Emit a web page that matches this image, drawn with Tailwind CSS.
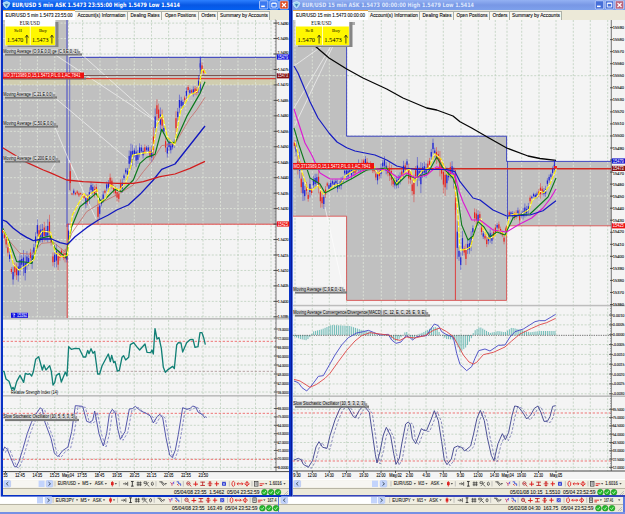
<!DOCTYPE html>
<html lang="en"><head><meta charset="utf-8"><title>EUR/USD charts</title>
<script src="https://cdn.jsdelivr.net/npm/@tailwindcss/browser@4"></script></head>
<body class="w-[625px] h-[514px] overflow-hidden bg-[#ece9d8] font-['Liberation_Sans',sans-serif]">
<div class="flex flex-col w-[625px] h-[514px]">
  <main class="flex h-[497px]">
    <section class="flex flex-col w-[291px] h-[497px] border-l border-l-[#c4c8f4] bg-[#ece9d8]">
      <div class="flex flex-col h-[497px] border-l-2 border-r-2 border-b-2 border-[#0831c4]">
        <header id="titleL" class="h-[10px] bg-linear-to-b from-[#2c80ff] via-[#0757e4] to-[#0560f0]"></header>
        <nav id="tabsL" class="flex h-[10px] bg-[#ece9d8]"></nav>
        <div id="chartL" class="h-[459px]"></div>
        <div id="toolL" class="h-[9px] border-t border-white bg-[#f0eee2]"></div>
        <div id="statL" class="h-[7px] border-t border-[#b8b5a5] bg-[#ece9d8]"></div>
      </div>
    </section>
    <section class="flex flex-col w-[334px] h-[497px] border-l border-l-[#06189c] bg-[#ece9d8]">
      <div class="flex flex-col h-[497px] border-l border-b-2 border-[#5d7ce0] border-b-[#3746b8]">
        <header id="titleR" class="h-[10px] bg-linear-to-b from-[#93b1f3] via-[#7897e5] to-[#7da0ec]"></header>
        <nav id="tabsR" class="flex h-[10px] bg-[#ece9d8]"></nav>
        <div id="chartR" class="h-[459px]"></div>
        <div id="toolR" class="h-[9px] border-t border-white bg-[#f0eee2]"></div>
        <div id="statR" class="h-[7px] border-t border-[#b8b5a5] bg-[#ece9d8]"></div>
      </div>
    </section>
  </main>
  <footer class="flex h-[17px] border-b-2 border-[#7590e4] bg-[#ece9d8]">
    <div class="flex flex-col w-[279px] border-r border-[#5d7ce0]">
      <div id="toolBL" class="h-[7px] bg-[#f0eee2]"></div>
      <div id="statBL" class="h-[8px] border-t border-[#b8b5a5]"></div>
    </div>
    <div class="flex flex-col w-[346px] border-r-2 border-[#5d7ce0]">
      <div id="toolBR" class="h-[7px] bg-[#f0eee2]"></div>
      <div id="statBR" class="h-[8px] border-t border-[#b8b5a5]"></div>
    </div>
  </footer>
</div>
<script>
const put = (id, s) => document.getElementById(id).innerHTML = s;
const svg = (x, y, w, h, s) => `<svg class="block shrink-0 overflow-visible" width="${w}" height="${h}" viewBox="${x} ${y} ${w} ${h}">${s}</svg>`;
const T = (x, y, w, s, size = 5, a = '') => `<text x="${x}" y="${y}" textLength="${w}" lengthAdjust="spacingAndGlyphs" font-size="${size}" ${a}>${s}</text>`;
const L = (x1, y1, x2, y2, c, w = 1, a = '') => `<line x1="${x1}" y1="${y1}" x2="${x2}" y2="${y2}" stroke="${c}" stroke-width="${w}" ${a}/>`;
const R = (x, y, w, h, c, a = '') => `<rect x="${x}" y="${y}" width="${w}" height="${h}" fill="${c}" ${a}/>`;
const P = (p, c, w = 1, a = '') => `<polyline points="${p}" fill="none" stroke="${c}" stroke-width="${w}" stroke-linejoin="round" ${a}/>`;
const zoomed = (x, y, s) => `<g transform="translate(${x} ${y}) scale(.33333)">${s}</g>`;
let seed = 7;
const rnd = () => (seed = (seed * 16807) % 2147483647) / 2147483647;

/* title bars */
function title(x0, w, textX, textW, s, btn, active) {
  let g = `<path d="M${textX-9} 3q4 -3 7 0q-1 4 -3.5 5q-3 -1 -3.5 -5z" fill="#9bd3ee" stroke="#d7f3ff" stroke-width=".7"/><path d="M${textX-7} 4h3l-1.5 3z" fill="#397ab8"/>`;
  g += T(textX, 7.1, textW, s, 6, `font-family="DejaVu Sans Condensed, DejaVu Sans, sans-serif" font-weight="bold" fill="${active ? '#fff' : '#dce6fd'}"`);
  const cols = active ? ['#3b79f0', '#3b79f0', '#df4b22'] : ['#466fd9', '#466fd9', '#bd6478'];
  btn.forEach((b, i) => {
    g += `<rect x="${b-4.2}" y=".8" width="8.4" height="8.2" rx="1" fill="${cols[i]}" stroke="#d5e1ff" stroke-width=".7"/>`;
    g += i == 0 ? R(b - 2.5, 5.6, 3.6, 1.5, '#fff') : i == 1 ? `<path d="M${b-2.2} 3h4.4v4h-4.4zM${b-2.2} 3.4h4.4" fill="none" stroke="#fff" stroke-width=".9"/>` : `<path d="M${b-2} 3l4 4m0 -4l-4 4" stroke="#fff" stroke-width="1.2"/>`;
  });
  return svg(x0, 0, w, 10, g);
}
put('titleL', title(3, 286, 12, 168, 'EUR/USD 5 min ASK 1.5473 23:55:00 High 1.5479 Low 1.5414', [263.7, 274, 284], true));
put('titleR', title(293, 332, 302, 172, 'EUR/USD 15 min ASK 1.5473 00:00:00 High 1.5479 Low 1.5414', [599.5, 609.5, 619.5], false));

/* tabs */
const tab = (w, tw, s, on) => `<div class="${on ? 'bg-white border-t border-[#e8a33c] h-[10px]' : 'bg-[#f8f7f1] border-t border-r border-[#aeb2a8] mt-[1px] h-[9px]'} shrink-0" style="width:${w}px">${svg(0, on ? 1 : 2, w - (on ? 0 : 1), on ? 9 : 8, T((w - tw) / 2, 7.2, tw, s, 5.4, 'fill="#111" stroke="#111" stroke-width=".12"'))}</div>`;
const names = ['Account(s) Information', 'Dealing Rates', 'Open Positions', 'Orders', 'Summary by Accounts'];
put('tabsL', tab(72, 67, 'EUR/USD 5 min 1.5473 23:55:00', 1) + names.map((n, i) => tab([53, 34, 37, 19, 52][i], [48, 29, 31, 14.5, 48][i], n)).join(''));
put('tabsR', tab(75, 69, 'EUR/USD 15 min 1.5473 00:00:00', 1) + names.map((n, i) => tab([52, 34, 36, 20, 52][i], [48, 29, 31, 15, 48][i], n)).join(''));

/* candles follow [x, middle, half range] key points */
function candles(k, step) {
  let g = '', i = 0;
  for (let x = k[0][0]; x <= k[k.length - 1][0]; x += step) {
    while (i < k.length - 2 && x > k[i + 1][0]) i++;
    const a = k[i], b = k[i + 1], t = (x - a[0]) / (b[0] - a[0]);
    const m = a[1] + (b[1] - a[1]) * t, h = a[2] + (b[2] - a[2]) * t;
    const down = b[1] > a[1], c = rnd() < .78 === down ? '#e8231e' : '#1c22d6';
    const off = (rnd() - .5) * h * .9, hh = h * (.35 + rnd() * .65);
    g += L(x, m + off - hh, x, m + off + hh, c, 1.8, 'opacity=".75"');
    g += R(x - 1.8, m + off - hh * .42, 3.6, hh * .84, c);
  }
  return g;
}
function yellow(k) {
  const p = k.map((a, i) => [a[0] + 2, i ? a[1] * .65 + k[i - 1][1] * .35 : a[1]].join()).join(' ');
  return P(p, '#fff200', 3.3) + P(p, '#fffbd0', 3, 'stroke-dasharray="5 13"');
}
const grid = (xs, ys, x1, x2, y1, y2) => xs.map(x => L(x, y1, x, y2, '#bccfbc', .8, 'stroke-dasharray="2 1.6"')).join('') + ys.map(y => L(x1, y, x2, y, '#bccfbc', .8, 'stroke-dasharray="2 1.6"')).join('');
const gridOnGray = (xs, ys, rx, ry, rw, rh) => xs.filter(x => x > rx && x < rx + rw).map(x => L(x, ry, x, ry + rh, '#e2e8dc', .8, 'stroke-dasharray="2 1.6"')).join('') + ys.filter(y => y > ry && y < ry + rh).map(y => L(rx, y, rx + rw, y, '#e2e8dc', .8, 'stroke-dasharray="2 1.6"')).join('');
const label = (x, y, w, s) => R(x + 2, y + 1.4, w + 1, 2.2, '#777') + R(x, y - 3.2, w, 4.8, '#d6d6d6') + T(x + .3, y + .8, w - 1.5, s, 4.5, 'fill="#000"') + R(x + w - 1, y - 1, 2.2, 3.6, '#999');
const axisT = (x, y, s, w) => T(x, y + 1.5, w, s, 4.3, 'fill="#111" stroke="#111" stroke-width=".12"');
const tag = (x, y, w, s, c) => R(x - 1, y - 2.6, w + 2, 5.2, c) + T(x, y + 1.6, w - .5, s, 4.5, 'fill="#fff"');
function quote(x, y, w) {
  const h = w / 2;
  const cell = (cx, n, v) => R(cx, y + 6.5, h - .4, 18.6, '#fff700') + T(cx + h / 2 - 4, y + 11.5, 8, n, 5, 'font-family="Liberation Serif"') + T(cx + 1.5, y + 21.6, h * .66, v, 7, 'font-family="Liberation Serif"') + `<path d="M${cx+h-3.4} ${y+23.5}v-8M${cx+h-5} ${y+17.5}l1.6 -2.4l1.6 2.4" stroke="#222" stroke-width=".8" fill="none"/>`;
  return R(x + 2, y + 2, w + 1.5, 25, '#858585') + R(x - .5, y, w + .8, 25.4, '#fff') + T(x + w * .29, y + 5, 20, 'EUR/USD', 5.2, 'font-family="Liberation Serif"') + cell(x, 'Sell', '1.5470') + cell(x + h + .3, 'Buy', '1.5473');
}
const order = (y, x = 3) => R(x + 1, y + 2, 82, 2, '#777') + R(x, y - 3, 81, 6, '#ee1111') + T(x + .5, y + 1.7, 77, 'MO,3713989,D,15,1.5473,P/L:0.1,AC,7841', 4.5, 'fill="#fff"');

/* left chart */
{
  const xs = [20.3, 37.4, 54.8, 82.6, 100, 117, 134.3, 151.5, 168.6, 185.8, 203, 220.5, 238, 255.5, 271];
  const ys = Array.from({ length: 20 }, (_, i) => 23.1 + i * 15.46);
  let g = R(3, 20, 286, 459, '#f4f4f4') + grid([...xs, 68.4], ys, 3, 276, 20, 318) + grid([...xs, 68.4], [329, 338, 347, 356, 365, 374, 383, 392, 408.5, 416.9, 425.3, 433.7, 442.1, 450.5, 458.9, 467.3], 3, 276, 320, 471);
  g += R(3, 20, 65, 298, '#c0c0c0') + R(68, 57, 208, 167, '#c0c0c0');
  g += R(3, 79, 273, 6, '#d0cdaf');
  g += gridOnGray(xs, ys, 3, 20, 65, 298) + gridOnGray(xs, ys, 68, 57, 208, 167);
  g += L(67, 20, 67, 227, '#3338c8', .9) + L(69.7, 57.3, 69.7, 190, '#4a50cc', .7) + L(69.7, 57.3, 276, 57.3, '#2b34bd');
  g += L(67.2, 224, 67.2, 318, '#e24848') + L(67, 224.2, 276, 224.2, '#e24848');
  g += P('54,54 160,124', '#f4f4f4', .7) + P('80,53 156,121', '#f4f4f4', .7) + P('54,97 131,162', '#f4f4f4', .7) + P('54,125 73,170', '#f4f4f4', .7) + P('50,172 57,160', '#f4f4f4', .7) + P('69,160 96,219', '#f4f4f4', .7);
  g += L(3, 75.5, 276, 75.5, '#7c5550') + L(3, 78.6, 276, 78.6, '#df3b32', 1.1);
  const k1 = [[8,210,12],[20,245,24],[38,350,28],[55,320,34],[75,315,42],[100,290,28],[113,200,42],[125,220,34],[150,215,42],[163,310,42],[180,280,28],[200,290,24],[206,190,90],[209,60,60],[215,98,10],[250,102,10],[260,120,26],[275,85,28],[289,90,34],[295,150,36],[315,95,15],[330,65,26],[355,105,22],[375,50,24],[392,-5,40],[396,-20,38],[430,-22,24],[455,-25,24],[462,-70,80],[470,-155,38],[485,-125,36],[500,-38,26],[522,-48,14],[529,-110,50],[540,-170,26],[550,-160,22],[565,-210,22],[590,-205,16],[598,-245,40],[602,-280,40],[608,-268,12],[616,-254,14]];
  const mid = candles(k1, 5.2) + L(601, -310, 601, -200, '#3038cf', 3) + P('8,205 15,225 30,245 60,280 95,283 125,250 160,247 195,275 203,255 215,220 260,155 300,130 350,105 400,75 430,35 455,5 485,-43 525,-49 570,-125 590,-150 615,-188', '#c86460', 2.2)
    + P('8,205 30,250 50,305 75,306 95,310 120,235 150,228 165,265 198,293 205,250 215,200 240,140 265,120 288,100 305,128 345,88 365,95 400,60 420,10 440,-8 465,-17 485,-92 505,-54 525,-52 560,-130 600,-200 615,-235', '#0b7a1c', 3.6)
    + yellow(k1.filter((_, i) => i != 12 && i != 13 && i != 28))
    + P('8,180 20,185 40,205 60,220 80,232 100,242 130,237 155,237 180,248 203,253 225,230 260,203 295,180 325,165 350,150 385,135 420,103 460,60 485,28 525,12 615,-102', '#1117bf', 4)
    + P('8,-37 60,-5 75,5 130,30 150,38 200,60 250,65 350,70 400,70 430,65 480,50 525,42 570,25 615,4', '#d21d1d', 3.8);
  g += zoomed(0, 160, mid);
  g += label(3, 52, 76, 'Moving Average (O,9,E,0,0)  ge (C,9,E,0,-1)') + label(3, 95, 51, 'Moving Average (C,21,E,0,0)') + label(3, 124, 52, 'Moving Average (C,50,E,0,0)') + label(3, 159, 54, 'Moving Average (C,200,E,0,0)');
  g += order(75.5) + quote(5.5, 20, 49.5);
  g += R(11, 312.8, 17, 5, '#1010e0') + `<path d="M12.5 314h2.5l-1 1.5v1.8" stroke="#fff" stroke-width=".8" fill="none"/>` + T(17, 317, 10, '15392', 4.6, 'fill="#fff"');
  g += R(3, 318, 286, 1.6, '#bdbdbd') + R(3, 395, 286, 1.6, '#bdbdbd');
  /* rsi and stochastic panels */
  let low = L(8, 94, 828, 94, '#ee5555', 2.4, 'stroke-dasharray="7 5"') + L(8, 184, 828, 184, '#a88f8f', 2.4, 'stroke-dasharray="7 5"') + L(8, 310, 828, 310, '#ee5555', 2.4, 'stroke-dasharray="7 5"') + L(8, 448, 828, 448, '#ee5555', 2.4, 'stroke-dasharray="7 5"');
  low += P('8,184 12,184 18,207 27,214 35,238 39,232 43,240 50,215 60,196 71,217 76,190 84,193 89,191 95,198 100,185 107,148 116,140 127,180 132,165 138,180 149,167 154,184 159,225 164,218 169,196 178,190 184,216 196,186 201,198 206,110 214,118 225,115 238,116 250,141 257,141 263,121 267,131 273,116 279,130 284,124 293,192 299,192 306,168 325,132 331,155 335,136 341,158 345,154 352,183 358,181 366,142 371,137 377,150 386,142 391,104 401,98 410,110 419,120 435,102 441,127 452,128 456,120 460,132 465,56 471,87 477,83 484,115 490,172 496,187 505,178 518,169 523,176 530,105 535,98 543,99 548,126 560,98 570,89 579,88 585,112 594,110 600,68 606,68 611,83 616,104', '#128076', 4);
  const st = '8,425 14,411 22,418 32,443 43,469 49,471 57,454 68,419 82,370 94,338 104,318 121,293 127,299 135,337 153,385 163,429 174,440 188,422 204,411 215,365 226,287 248,289 260,334 269,337 278,331 284,303 297,371 304,392 310,408 320,370 328,313 337,298 346,309 353,356 361,388 375,365 388,297 397,296 406,289 421,302 440,311 451,318 460,339 472,319 480,313 488,323 498,383 509,435 517,443 526,420 535,373 548,293 561,298 571,295 578,288 587,291 594,306 607,314 615,324';
  low += P(st, '#494ba6', 2.8) + `<g transform="translate(8 3)">${P(st, '#6769b7', 2.2, 'stroke-dasharray="8 5"')}</g>`;
  g += zoomed(0, 310, low);
  g += T(11, 394, 47, 'Relative Strength Index (14)', 4.6) + label(3, 417.5, 73, 'Slow Stochastic Oscillator (10, 5, 5, 3, 5)');
  g += L(276, 20, 276, 471.5, '#555', .8) + L(3, 471.6, 289, 471.6, '#333', .9);
  for (let y = 20; y < 318; y += 3.09) g += L(274.7, y, 276, y, '#777', .6);
  for (let y = 323; y < 471; y += 4.5) g += L(275, y, 276, y, '#777', .6);
  ys.forEach((y, i) => g += L(273.5, y, 278, y, '#333', .8) + (i == 13 ? '' : axisT(277.8, i == 2 ? y - 1.8 : y, '1.5' + (490 - i * 5), 10.8)));
  ['78.0000', '72.0000', '66.0000', '60.0000', '54.0000', '48.0000', '42.0000', '36.0000'].forEach((s, i) => g += L(274, 329 + i * 9, 278, 329 + i * 9, '#333', .7) + axisT(277.8, 329 + i * 9, s, 10.8));
  ['86.0000', '75.0000', '64.0000', '53.0000', '42.0000', '31.0000', '20.0000', '9.0000'].forEach((s, i) => g += L(274, 408.5 + i * 8.4, 278, 408.5 + i * 8.4, '#333', .7) + axisT(277.8, 408.5 + i * 8.4, s, 10.8));
  g += tag(277.8, 57, 10.6, '15479', '#1111dd') + tag(277.8, 75.8, 10.6, '15473', '#811') + tag(277.8, 224, 10.6, '15425', '#e11');
  ['55', '12:45', '14:35', '15:25', 'May,04', '17:55', '18:45', '19:35', '20:25', '21:15', '22:05', '22:55', '23:50'].forEach((s, i) => { const x = [5.5, 20, 37.3, 54.6, 68, 82, 99.5, 117, 134.5, 151.5, 168.7, 186, 203.3][i], w = i == 0 ? 4 : i == 4 ? 12 : 9.5; g += L(x, 471, x, 473, '#333', .8) + T(x - w / 2, 476.8, w, s, 4.8, 'stroke="#111" stroke-width=".1"'); });
  put('chartL', svg(3, 20, 286, 459, g));
}

/* right chart */
{
  const xs = [295, 312.3, 329.3, 363.3, 381.3, 395.3, 409, 426, 443.3, 461, 478.3, 495.3, 507, 521.7, 539, 556, 573.3, 590.3, 607.7];
  const ys = [75.7, 136, 196, 256];
  let g = R(293, 20, 332, 459, '#f4f4f4') + grid([...xs, 346.7], [...ys, ...[0, 1, 3, 4, 5, 6, 7, 8].map(i => 315 + i * 9.85), ...[0, 1, 2, 3, 4, 5, 6, 7].map(i => 409.3 + i * 8.3)], 293, 611, 20, 471);
  const boxes = [[293, 20, 53.5, 196], [346.5, 136, 160.3, 164.3], [506.8, 161.3, 104.2, 64.4]];
  boxes.forEach(b => { g += R(...b, '#c0c0c0') + gridOnGray(xs, ys, ...b); });
  g += P('346.6,20 346.6,136.2 506.6,136.2 506.6,161.4 611,161.4', '#3038c0', .9) + L(507.4, 161, 507.4, 215, '#3038c0', .9);
  g += P('293,216.2 346.6,216.2 346.6,300.4 506.6,300.4 506.6,225.8 611,225.8', '#d85050', .9) + L(455.4, 170, 455.4, 300, '#e03030', .9);
  g += P('294,66 342,32', '#f4f4f4', .7) + P('294,108 337,36', '#f4f4f4', .7) + P('295,125 334,44', '#f4f4f4', .7) + P('325,207 343,288', '#fff', .6);
  g += L(293, 168.8, 611, 168.8, '#d12a22', 1.5);
  const a = [[13,50,26],[22,105,34],[35,165,50],[50,205,44],[65,190,22],[82,175,50],[98,225,34],[110,185,20],[130,180,22],[150,175,20],[165,140,26],[190,135,20],[205,125,20],[235,115,22],[250,130,18],[262,155,30],[285,115,26],[300,160,44],[318,185,28],[345,115,26],[358,140,34],[370,190,56],[380,140,60],[395,135,50],[415,125,16],[432,65,34],[450,120,50],[470,165,44],[488,145,50],[492,145,60],[500,290,76],[508,420,40],[518,350,42],[528,385,38],[540,355,28],[555,275,36],[572,285,28],[577,325,28],[595,350,24],[610,325,20],[625,310,22],[645,345,17],[650,290,15],[656,265,10],[672,267,12],[690,270,28],[715,245,18],[725,215,12],[740,215,14],[748,190,36],[760,210,16],[775,170,20],[789,140,18],[797,125,14]];
  g += zoomed(290, 125, candles(a, 5.2) + yellow(a.filter(q => q[0] != 492)));
  g += P('294,128 299,145 305,163 310,178 320,184 325,193 340,185 353,178 366.7,170 386.7,168 396.7,185 406.7,175 415,178 428,173 436.7,157 443,168 453,178 456.7,188 461.7,225 468,240 473,236 478,221.7 484,227 490,236.7 497,232 505,235 513,218 518,215 530,214 541.7,203 548,197 556,178', '#0b7a1c', 1.1);
  g += P('294,109 305,143 311.7,155 320,173 330,179 346.7,179 360,171.7 370,168 386.7,170 398,177.7 406.7,173 415,177.7 426.7,175 436.7,166.7 446,170 455,175 459,191 463,201.7 471.7,220 480,220 493,230 506.7,232 518,225 531.7,218 543,208 550,199 556,189', '#dd16d3', 1.1);
  g += P('294,66 298,73 310,101.7 318,118 329,133 337,142 346.7,147.7 355,151 365,153 375,155 386.7,160 396.7,166 405,168 416.7,169.5 446.7,169.5 455,171.7 460,181.7 473,198 480,200 493,210 506.7,216 530,215 543,210.7 549,206 556,200.7', '#151bc2', 1.2);
  g += P('307,38 312.7,44 329,58 346.7,69 363,78 386.7,89 403,98 426.7,108 436.7,110 453,116 460,121.7 471.7,128 489,138 506.7,148 528,156 540,158.5 556,160.3', '#050505', 1.3);
  g += L(554.6, 160, 554.6, 170, '#1c22d6', .8) + R(554, 166, 3, 2.6, '#e22');
  g += order(166, 293) + R(351, 22, 4, 3, '#aaa') + quote(296, 20, 53) + label(293, 290, 51, 'Moving Average (C,9,E,0,-1)');
  g += R(293, 304.8, 332, 1.5, '#bdbdbd') + R(293, 395.4, 332, 1.6, '#bdbdbd');
  /* macd and stochastic panels */
  let low = '';
  const hk = [[14,-5],[30,-12],[50,-16],[62,-4],[68,10],[95,17],[125,30],[180,27],[215,15],[245,8],[262,1],[295,-3],[318,-20],[335,-5],[348,12],[368,-14],[380,0],[400,8],[425,22],[440,25],[450,3],[470,-12],[495,-14],[510,-52],[530,-35],[545,-8],[552,12],[570,24],[600,6],[625,12],[645,8],[665,22],[690,16],[720,8],[750,12],[800,12]];
  for (let x = 14, i = 0; x <= 800; x += 5.7) { while (x > hk[i + 1][0]) i++; const p = hk[i], q = hk[i + 1], h = p[1] + (q[1] - p[1]) * (x - p[0]) / (q[0] - p[0]); low += L(x, 90, x, 90 - h, '#65b7b2', 2.8); }
  low += L(8, 91, 963, 91, '#555', 2.4, 'stroke-dasharray="4 3"');
  low += P('12,228 25,233 36,248 50,258 62,245 75,228 85,214 100,212 118,180 135,150 155,120 175,98 200,84 220,80 235,76 250,82 270,90 295,88 305,105 318,115 333,111 348,92 360,98 368,105 380,95 410,92 420,75 433,57 445,62 455,80 468,88 490,97 500,145 510,178 530,197 545,185 555,160 566,137 585,132 600,138 625,121 645,120 660,96 675,80 700,72 735,50 748,47 765,47 797,28', '#4447c5', 2.7);
  low += P('12,223 30,228 60,247 80,238 105,220 120,205 145,170 170,136 195,108 215,92 240,83 270,87 300,91 315,103 330,106 350,96 375,99 405,92 430,76 450,69 470,80 490,95 505,122 520,150 537,171 550,177 560,172 580,149 610,142 645,126 665,108 690,87 725,70 750,59 770,53 797,40', '#df4545', 2.7);
  low += L(8, 324, 963, 324, '#ee5555', 2.4, 'stroke-dasharray="7 5"') + L(8, 468, 963, 468, '#ee5555', 2.4, 'stroke-dasharray="7 5"') ;
  const st = '12,465 25,460 33,464 40,478 55,487 68,466 78,426 87,410 98,427 111,430 120,392 135,345 150,310 163,303 175,308 190,335 196,338 208,316 220,302 230,312 238,322 246,378 256,448 261,474 270,440 280,390 289,367 302,393 311,445 318,478 328,460 336,413 347,357 355,351 361,358 367,400 377,416 387,390 394,371 402,376 410,376 424,342 433,317 445,347 455,410 463,465 471,479 484,462 492,428 503,423 514,427 524,438 542,423 550,390 561,340 571,316 583,347 592,398 604,451 612,467 624,416 637,386 646,404 656,382 666,332 674,303 685,305 700,325 710,342 722,330 733,310 744,303 753,323 762,349 772,349 780,335 788,304 797,302';
  low += P(st, '#41458f', 2.8) + `<g transform="translate(9 3)">${P(st.replace(' 797,302', ''), '#6164a5', 2.2, 'stroke-dasharray="8 5"')}</g>`;
  g += zoomed(290, 305, low);
  g += label(293, 313, 134, 'Moving Average Convergence/Divergence(MACD) (C, 12, E, C, 26, E, 9, E)') + label(293, 404.2, 73, 'Slow Stochastic Oscillator (10, 5, 3, 2, 3)');
  g += L(611.3, 20, 611.3, 471, '#555', .8) + L(293, 471, 625, 471, '#333', .9);
  for (let y = 306; y < 471; y += 2.5) g += L(610, y, 611, y, '#777', .6);
  for (let i = 0; i < 24; i++) { const y = 27.6 + i * 12.04; g += L(610, y, 613, y, '#333', .8) + (i == 11 ? '' : axisT(612.8, i == 12 ? 173.6 : i == 16 ? 220.6 : i == 17 ? 231.6 : y, 15590 - i * 10, 11.2)); }
  ['0.0010', '0.0005', '0.0000', '-0.0005', '-0.0010', '-0.0015', '-0.0020', '-0.0025', '-0.0030'].forEach((s, i) => g += L(609, 315 + i * 9.85, 613, 315 + i * 9.85, '#333', .7) + axisT(612.8, 315 + i * 9.85, s, 11.6));
  ['85.5000', '75.0000', '64.5000', '54.0000', '43.5000', '33.0000', '22.5000', '12.0000'].forEach((s, i) => g += L(609, 409.3 + i * 8.3, 613, 409.3 + i * 8.3, '#333', .7) + axisT(612.8, 409.3 + i * 8.3, s, 11.6));
  g += tag(612.8, 161, 11.5, '15479', '#1111cc') + tag(612.8, 168.4, 11.5, '15473', '#811') + tag(612.8, 225.8, 11.5, '15425', '#e11');
  ['9:30', '12:00', '14:30', '17:00', '19:30', '22:00', 'May,02', '2:00', '4:30', '7:00', '9:30', '12:00', '14:30', 'May,04', '19:00', '21:30', 'May,05'].forEach((s, i) => { const x = [297, 312.3, 329.3, 346.5, 363.7, 381, 395.5, 409.5, 426.3, 443.3, 460.5, 478, 494.5, 507.7, 521.5, 538.5, 556][i], w = s[0] == 'M' ? 12.5 : s.length == 4 ? 7.5 : 9; g += L(x, 471, x, 473, '#333', .8) + T(x - w / 2, 476.8, w, s, 4.8, 'stroke="#111" stroke-width=".1"'); });
  put('chartR', svg(293, 20, 332, 459, g));
}

/* toolbar icons, drawn on a 3x grid centred on y = 0 */
function tools(sym, per, price) {
  const t = (x, w, s) => T(x, 5, w, s, 14, 'fill="#222" stroke="#222" stroke-width=".3"');
  const dd = x => `<path d="M${x} -2h7l-3.5 4z" fill="#222"/>`;
  const p = (d, c, w = 2.6) => `<path d="${d}" stroke="${c}" stroke-width="${w}" fill="none"/>`;
  return L(165, -8, 165, 8, '#aaa', 2) + t(173, 55, sym) + dd(233) + t(247, 18, per) + dd(268) + t(284, 26, 'ASK') + dd(314)
    + p('M337 -8v16', '#d22') + R(333, -5, 8, 9, '#d22') + dd(344) + L(358, -8, 358, 8, '#aaa', 2)
    + p('M369 0h11M376 -4l4 4l-4 4M383 -6v12', '#222', 2) + p('M393 -7h8M397 -7v14M393 7h8', '#222', 2.5) + p('M414 -7v14M421 -7v14M410 -3h15M410 3h15', '#222', 2)
    + p('M432 -6h8v5h-8zM434 7l12 -12M440 1l8 7', '#333', 2) + `<ellipse cx="457" cy="0" rx="3" ry="5" fill="none" stroke="#222" stroke-width="2"/>` + L(468, -8, 468, 8, '#aaa', 2)
    + p('M478 -6h9l3 5M483 -5l8 11M490 -1l6 4', '#333', 2.3) + dd(494)
    + p('M511 -4l5 4v6M516 0l6 -6', '#c3396b') + p('M521 -6v7', '#55f') + p('M530 -6h6v6h6v6', '#3548d2') + p('M536 5l-5 -4', '#d33') + L(550, -8, 550, 8, '#aaa', 2)
    + `<circle cx="565" cy="-1" r="5" fill="#fff" stroke="#933" stroke-width="2.5"/>` + p('M569 3l5 5M562 -1h6', '#c22')
    + p('M580 1h14M587 -7v14', '#d22', 3) + p('M601 -5h14M601 5h14M608 -6v11', '#b22') + p('M623 0h14M630 -8v16M626 -5h8M626 5h8', '#c22') + p('M644 0h13M650 -7v14', '#d22', 3)
    + R(666, -6, 12, 12, '#3844cc') + p('M668 5l8 -9M668 -3l8 7', '#b4c1ff', 2) + L(688, -8, 688, 8, '#aaa', 2)
    + p('M696 -4l4 -4l4 4v8l-4 4l-4 -4z', '#d22') + p('M711 0h18M715 -4l-4 4l4 4M725 -4l4 4l-4 4', '#d22') + p('M734 0l7 -6l7 6l-7 6zM741 -8v16', '#d22') + L(756, -8, 756, 8, '#aaa', 2)
    + R(764, -7, 10, 14, '#ddd', 'stroke="#333" stroke-width="2"') + p('M766 -3h6M766 1h6', '#333', 1.5) + p('M779 0h14M779 5h8', '#d33', 3) + dd(795)
    + t(808, sym == 'EUR/USD' ? 37 : 27, price) + (sym == 'EUR/USD' || per == 'M15' ? dd(850) : '');
}
const button = (x, y, d) => `<rect x="${x}" y="${y-3.3}" width="6.6" height="6.6" rx="1" fill="#c3d4fc" stroke="#a6baf0" stroke-width=".5"/><path d="M${x+3.3+d} ${y-1.7}l${-2*d} 1.7l${2*d} 1.7" fill="none" stroke="#345" stroke-width=".9"/>`;
function toolbar(x0, y0, w, h, cy, off, s1, s2, bar, handle, left, args) {
  let g = R(s1, cy - 3.6, s2 - s1, 7.2, bar);
  if (left) g += button(s1, cy, 1);
  g += R(handle, cy - 3.2, 6, 6.4, '#c3d4fc') + button(s2 - 6.8, cy, -1);
  g += `<g transform="translate(${off} ${cy}) scale(.33333)">${tools(...args)}</g>`;
  return svg(x0, y0, w, h, g);
}
put('toolL', toolbar(3, 479, 286, 8, 482.8, 0, 4, 53, '#f7f6f2', 38.6, true, ['EUR/USD', 'M5', '1.6016']));
put('toolR', toolbar(293, 479, 332, 8, 482.8, 336, 294, 387, '#f7f6f2', 372, true, ['EUR/USD', 'M15', '1.6016']));
put('toolBL', toolbar(0, 496, 278, 7, 499.2, -1.8, 0, 52, '#fff', 37, false, ['EUR/JPY', 'M5', '167.4']));
put('toolBR', toolbar(279, 496, 344, 7, 499.2, 334.7, 281, 385, '#fff', 371, true, ['EUR/JPY', 'M15', '167.46']));
function status(x0, w, h, tx, s) {
  let g = T(tx, 5.4, 85.5, s, 5.8, 'fill="#222" stroke="#222" stroke-width=".1"');
  for (let i = 0; i < 3; i++) { const x = tx + 90.4 + i * 6.8; g += `<circle cx="${x}" cy="3.2" r="2.9" fill="#25b52b" stroke="#118018" stroke-width=".4"/><path d="M${x-1.6} 3.2l1.2 1.4l2 -2.8" fill="none" stroke="#c5ffc8" stroke-width=".8"/>`; }
  if (x0) g += `<path d="M${tx+110} 6l4 -4M${tx+112} 6l2 -2" stroke="#aaa" stroke-width=".7"/>`;
  return svg(x0, 0, w, h, g);
}
put('statL', status(3, 286, 6, 174, '05/04/08 23:55&#160; 1.5462&#160; 05/04 23:52:59'));
put('statR', status(293, 332, 6, 510, '05/01/08 10:15&#160; 1.5510&#160; 05/04 23:52:59'));
put('statBL', status(0, 278, 7, 172, '05/04/08 23:55&#160; 163.49&#160; 05/04 23:52:59'));
put('statBR', status(279, 344, 7, 508, '05/02/08 04:30&#160; 163.75&#160; 05/04 23:52:59'));
</script>
</body></html>
